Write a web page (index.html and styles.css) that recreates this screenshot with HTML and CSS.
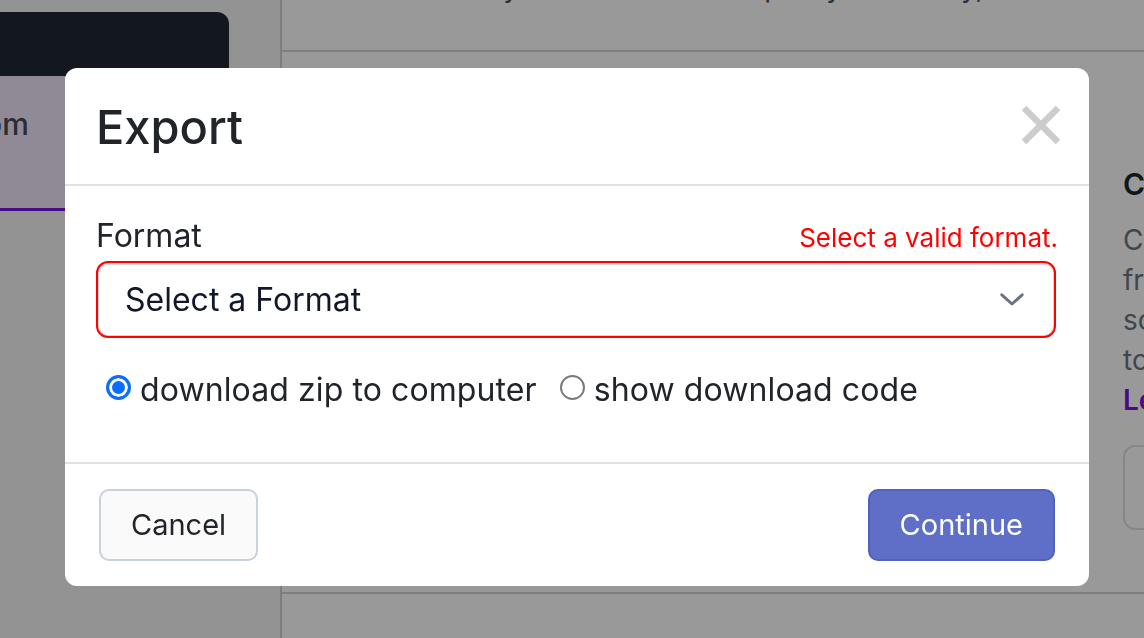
FILE: index.html
```html
<!DOCTYPE html>
<html lang="en">
<head>
<meta charset="utf-8">
<title>Export</title>
<link rel="stylesheet" href="styles.css">
</head>
<body>
<div class="page">
  <aside class="sidebar">
    <div class="brand"></div>
    <div class="nav-item"><span class="nav-label">Custom</span></div>
  </aside>
  <main class="main">
    <header class="topbar">
      <p class="topbar-text">Choose how you would like to export your library, then</p>
    </header>
    <section class="content">
      <div class="content-main"></div>
      <div class="aside-col">
        <h3 class="aside-title">Custom exports</h3>
        <p class="aside-text">Create a custom export<br>from your project and<br>screens as a zip file<br>to use anywhere.<br><a class="aside-link" href="#">Learn more</a></p>
        <div class="aside-box"></div>
      </div>
    </section>
    <footer class="page-footer"></footer>
  </main>
</div>

<div class="backdrop"></div>

<div class="modal-layer">
  <div class="modal">
    <div class="modal-header">
      <h4 class="modal-title">Export</h4>
      <button class="btn-close" type="button" aria-label="Close">
        <svg width="40" height="40" viewBox="0 0 40 40"><path d="M3 3L37 37M37 3L3 37" stroke="#cccccc" stroke-width="6.5" fill="none"/></svg>
      </button>
    </div>
    <div class="modal-body">
      <div class="field-head">
        <span class="field-label">Format</span>
        <span class="field-error">Select a valid format.</span>
      </div>
      <div class="select">
        <span class="select-text">Select a Format</span>
        <svg class="chevron" width="24" height="13" viewBox="0 0 24 13"><polyline points="1.8,1.8 12,11 22.2,1.8" fill="none" stroke="#6b7280" stroke-width="3" stroke-linecap="round" stroke-linejoin="round"/></svg>
      </div>
      <div class="radios">
        <label class="radio-option"><span class="radio radio-on"></span><span class="radio-text">download zip to computer</span></label>
        <label class="radio-option radio-second"><span class="radio radio-off"></span><span class="radio-text">show download code</span></label>
      </div>
    </div>
    <div class="modal-footer">
      <button class="btn btn-cancel" type="button">Cancel</button>
      <button class="btn btn-continue" type="button">Continue</button>
    </div>
  </div>
</div>
</body>
</html>
```

FILE: styles.css
```css
* { box-sizing: border-box; }

html, body {
  margin: 0;
  padding: 0;
  width: 1144px;
  height: 638px;
  overflow: hidden;
}

body {
  font-family: Inter, "Noto Sans", "Liberation Sans", sans-serif;
  color: #212529;
  background: #ffffff;
}

.page {
  display: flex;
  height: 638px;
}

/* sidebar (under backdrop) */
.sidebar {
  width: 282px;
  flex: none;
  background: #f5f5f5;
  border-right: 2px solid #ced4da;
  padding-top: 12px;
}

.brand {
  width: 229px;
  height: 64px;
  background: #202834;
  border-top-right-radius: 12px;
}

.nav-item {
  width: 229px;
  height: 135px;
  background: #f0e6fa;
  border-bottom: 3px solid #7c12e0;
  padding-top: 28px;
  overflow: hidden;
  white-space: nowrap;
}

.nav-label {
  display: inline-block;
  margin-left: -82px;
  font-size: 30px;
  line-height: 40px;
  color: #4a4a55;
  font-weight: 500;
}

/* main area */
.main {
  flex: 1;
  min-width: 0;
  display: flex;
  flex-direction: column;
}

.topbar {
  height: 52px;
  flex: none;
  border-bottom: 2px solid #ced4da;
  padding-left: 48px;
}

.topbar-text {
  margin: -33px 0 0;
  font-size: 28px;
  line-height: 40px;
  color: #495057;
  white-space: nowrap;
}

.content {
  height: 540px;
  flex: none;
  display: grid;
  grid-template-columns: 809px 360px;
  column-gap: 32px;
}

.aside-col {
  padding-top: 114px;
}

.aside-title {
  margin: 0;
  font-size: 30px;
  line-height: 36px;
  font-weight: 600;
  color: #212529;
  white-space: nowrap;
}

.aside-text {
  margin: 18px 0 0;
  font-size: 28px;
  line-height: 40px;
  color: #6c757d;
  white-space: nowrap;
}

.aside-link {
  color: #7c12e0;
  font-weight: 600;
  text-decoration: none;
}

.aside-box {
  margin-top: 25px;
  height: 85px;
  border: 2px solid #dee2e6;
  border-radius: 12px;
}

.page-footer {
  flex: 1;
  border-top: 2px solid #ced4da;
}

/* backdrop */
.backdrop {
  position: fixed;
  inset: 0;
  background: rgba(0, 0, 0, 0.4);
}

.modal-layer {
  position: fixed;
  inset: 0;
  padding: 68px 0 0 65px;
}

.modal {
  width: 1024px;
  background: #ffffff;
  border-radius: 12px;
  overflow: hidden;
}

.modal-header {
  display: flex;
  align-items: center;
  justify-content: space-between;
  padding: 30px 28px 28px 31px;
  border-bottom: 2px solid #dee2e6;
}

.modal-title {
  margin: 0;
  font-size: 47px;
  line-height: 58px;
  font-weight: 500;
  color: #212529;
}

.btn-close {
  border: 0;
  padding: 0;
  background: transparent;
  width: 40px;
  height: 40px;
  margin-bottom: 4px;
}

.btn-close svg { display: block; }

.modal-body {
  padding: 30px 33px 48px 31px;
}

.field-head {
  display: flex;
  justify-content: space-between;
  align-items: baseline;
  line-height: 40px;
  margin-bottom: 3px;
}

.field-label {
  font-size: 32px;
  color: #212529;
}

.field-error {
  font-size: 26px;
  color: #ff0000;
  margin-right: -2px;
}

.select {
  height: 77px;
  border: 2px solid #ff0000;
  border-radius: 12px;
  box-shadow: inset 0 0 0 1px #d4d6da, inset 0 2px 1px #d8dade;
  display: flex;
  align-items: center;
  justify-content: space-between;
  padding: 0 30px 0 27px;
}

.select-text {
  font-size: 32px;
  line-height: 48px;
  color: #111827;
}

.chevron { display: block; }

.radios {
  display: flex;
  align-items: center;
  margin-top: 28px;
  padding-left: 10px;
  font-size: 32px;
  line-height: 48px;
}

.radio-option {
  display: flex;
  align-items: center;
  gap: 9px;
}

.radio-second {
  margin-left: 23px;
}

.radio {
  width: 25px;
  height: 25px;
  border-radius: 50%;
  flex: none;
  margin-bottom: 6px;
}

.radio-on {
  border: 3px solid #0b6dfd;
  background: #0b6dfd;
  box-shadow: inset 0 0 0 3px #ffffff;
}

.radio-off {
  border: 2px solid #7a7a7a;
  background: #ffffff;
}

.radio-text {
  color: #212529;
  letter-spacing: 0.1px;
}

.modal-footer {
  display: flex;
  justify-content: space-between;
  align-items: center;
  padding: 25px 34px;
  border-top: 2px solid #dee2e6;
}

.btn {
  font-family: Inter, "Noto Sans", "Liberation Sans", sans-serif;
  font-size: 29px;
  line-height: 48px;
  padding: 10px 30px;
  border-radius: 10px;
  border: 2px solid transparent;
}

.btn-cancel {
  background: #fafafa;
  border-color: #c8d1dc;
  color: #212529;
}

.btn-continue {
  background: #5f6fc7;
  border-color: #5161c0;
  color: #ffffff;
}
```
